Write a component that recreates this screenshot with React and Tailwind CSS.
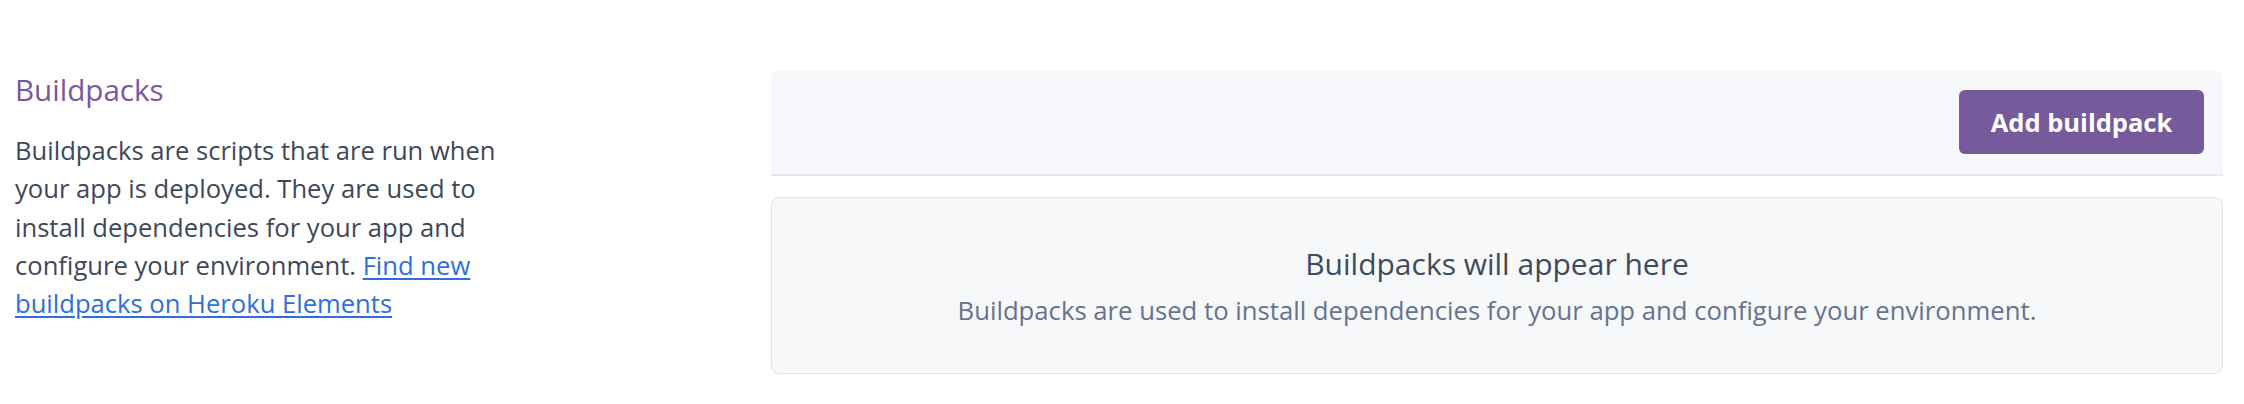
import React from 'react';

const font = { fontFamily: '"Open Sans", Lato, sans-serif' };

export default function App() {
  return (
    <div className="min-h-[404px] w-[2244px] bg-white" style={font}>
      <div className="flex pl-[15px] pr-[21px] pt-[70px]">
        {/* left: description */}
        <div className="w-[756px] shrink-0">
          <h2 className="mt-[2px] text-[29.6px] leading-[36px] text-[#79589f]">Buildpacks</h2>
          <p className="mt-[24px] w-[512px] text-[25.6px] leading-[38.3px] text-[#3f4859]">
            Buildpacks are scripts that are run when your app is deployed. They are used to install dependencies for
            your app and configure your environment.{' '}
            <a href="#" className="text-[#2f6fdb] underline underline-offset-[3px]">
              Find new buildpacks on Heroku Elements
            </a>
          </p>
        </div>

        {/* right: buildpack list */}
        <div className="flex-1">
          <div className="flex justify-end rounded-t-[8px] border-b-2 border-[#e4e8f0] bg-[#f7f8fb] p-[20px] pr-[19px]">
            <button className="h-[64px] w-[245px] rounded-[6px] bg-[#775a9b] text-[25.5px] font-bold text-white">
              Add buildpack
            </button>
          </div>

          <div className="mt-[21px] flex h-[177px] flex-col items-center rounded-[8px] border-[1.5px] border-[#e2e4e8] bg-[#f7f8fa] pt-[47px]">
            <div className="text-[30px] leading-[38px] text-[#3f4a60]">Buildpacks will appear here</div>
            <div className="mt-[11px] text-[25.7px] leading-[34px] text-[#65738f]">
              Buildpacks are used to install dependencies for your app and configure your environment.
            </div>
          </div>
        </div>
      </div>
    </div>
  );
}
